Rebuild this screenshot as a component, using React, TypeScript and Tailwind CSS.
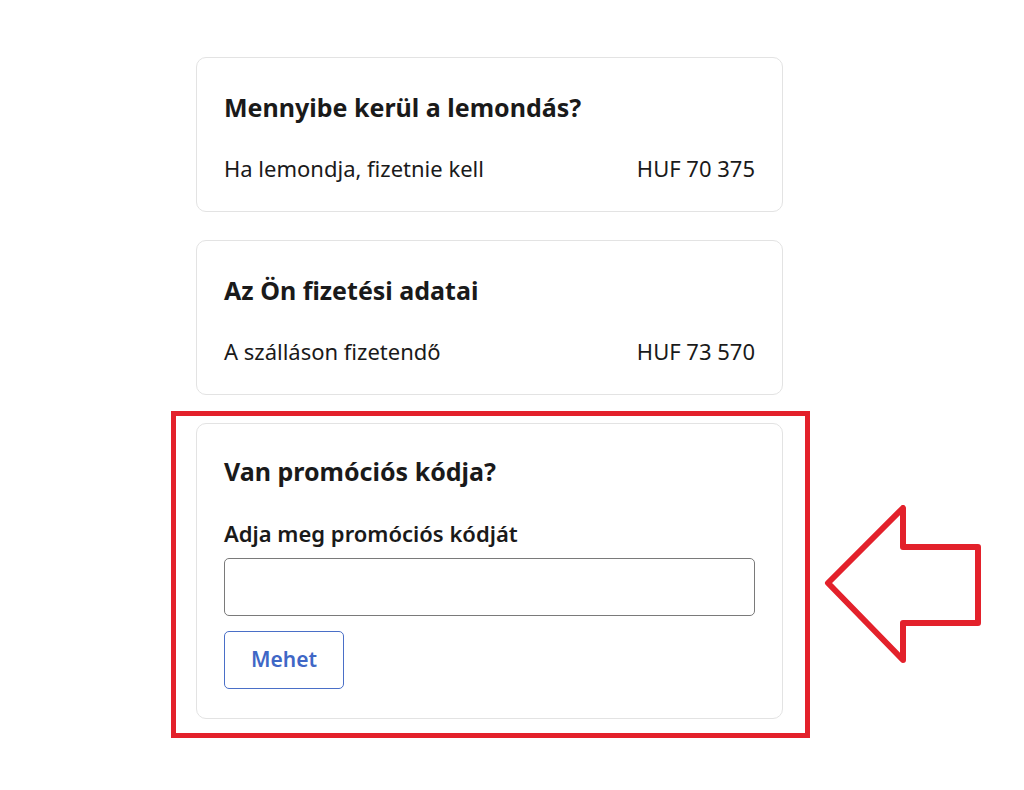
const FONT = { fontFamily: '"Noto Sans", "Open Sans", Arial, sans-serif' };

const SummaryCard = ({
  title,
  label,
  amount,
}: {
  title: string;
  label: string;
  amount: string;
}) => (
  <div className="rounded-[10px] border border-[#e3e3e3] bg-white px-[27px] pt-[32px] pb-[28px]">
    <h2 className="text-[25px] leading-[34px] font-bold text-[#1a1a1a]">
      {title}
    </h2>
    <div className="mt-[29px] flex items-center justify-between text-[22px] leading-[30px] text-[#1a1a1a]">
      <span>{label}</span>
      <span>{amount}</span>
    </div>
  </div>
);

const ArrowOutline = () => (
  <svg
    width="170"
    height="170"
    viewBox="0 0 170 170"
    className="pointer-events-none absolute top-[89px] left-[647px]"
  >
    <path
      d="M5 78 L80 3 L80 42 L155 42 L155 118 L80 118 L80 155 Z"
      fill="none"
      stroke="#e3212b"
      strokeWidth="6"
      strokeLinejoin="round"
    />
  </svg>
);

export default function App() {
  return (
    <div className="min-h-[790px] w-[1024px] bg-white pt-[57px]" style={FONT}>
      <div className="ml-[196px] flex w-[587px] flex-col gap-[28px]">
        <SummaryCard
          title="Mennyibe kerül a lemondás?"
          label="Ha lemondja, fizetnie kell"
          amount="HUF 70 375"
        />
        <SummaryCard
          title="Az Ön fizetési adatai"
          label="A szálláson fizetendő"
          amount="HUF 73 570"
        />

        <div className="relative -mt-[12px] -mr-[27px] -ml-[25px] border-[5px] border-[#e3212b] pt-[7px] pr-[22px] pb-[14px] pl-[20px]">
          <div className="rounded-[10px] border border-[#e3e3e3] bg-white px-[27px] pt-[30px] pb-[29px]">
            <h2 className="text-[25px] leading-[34px] font-bold text-[#1a1a1a]">
              Van promóciós kódja?
            </h2>
            <label className="mt-[30px] block text-[22px] leading-[30px] font-semibold text-[#1a1a1a]">
              Adja meg promóciós kódját
            </label>
            <input
              type="text"
              className="mt-[10px] block h-[58px] w-full rounded-[5px] border border-[#7a7a7a] bg-white px-3 text-[20px] outline-none"
            />
            <button
              type="button"
              className="mt-[15px] h-[58px] w-[120px] rounded-[5px] border border-[#4a6fc7] bg-white text-[21px] font-semibold text-[#3f67c6]"
            >
              Mehet
            </button>
          </div>
          <ArrowOutline />
        </div>
      </div>
    </div>
  );
}
